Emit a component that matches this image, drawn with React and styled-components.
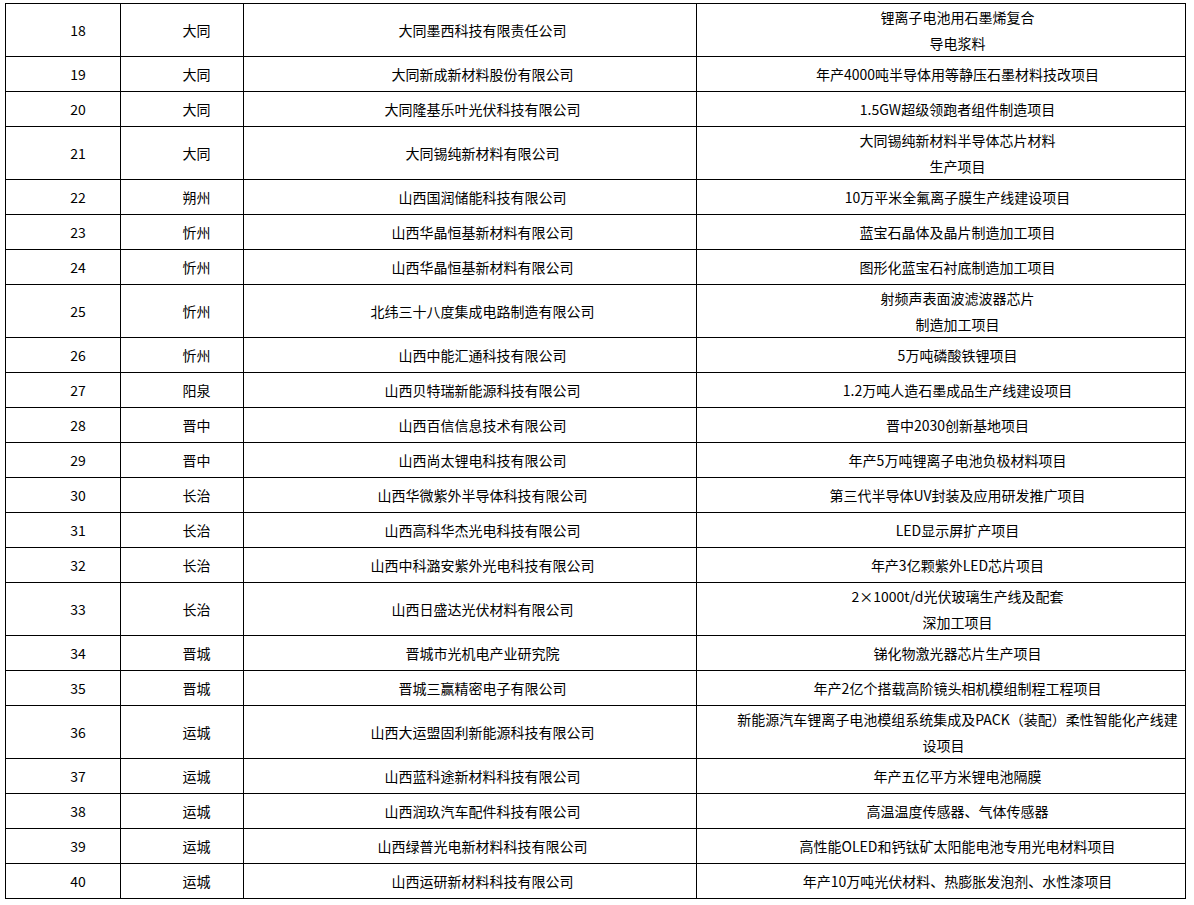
import React from "react";
import styled, { createGlobalStyle } from "styled-components";

const GlobalStyle = createGlobalStyle`
  html, body {
    margin: 0;
    padding: 0;
    background: #fff;
  }
  body {
    padding: 3px 0 0 5px;
    font-family: "Noto Sans CJK SC", "Liberation Sans", sans-serif;
    color: #000;
  }
`;

// [序号, 地市, 企业名称, 项目名称（按行）, 续行左移]
const rows = [
  [18, "大同", "大同墨西科技有限责任公司", ["锂离子电池用石墨烯复合", "导电浆料"]],
  [19, "大同", "大同新成新材料股份有限公司", ["年产4000吨半导体用等静压石墨材料技改项目"]],
  [20, "大同", "大同隆基乐叶光伏科技有限公司", ["1.5GW超级领跑者组件制造项目"]],
  [21, "大同", "大同锡纯新材料有限公司", ["大同锡纯新材料半导体芯片材料", "生产项目"]],
  [22, "朔州", "山西国润储能科技有限公司", ["10万平米全氟离子膜生产线建设项目"]],
  [23, "忻州", "山西华晶恒基新材料有限公司", ["蓝宝石晶体及晶片制造加工项目"]],
  [24, "忻州", "山西华晶恒基新材料有限公司", ["图形化蓝宝石衬底制造加工项目"]],
  [25, "忻州", "北纬三十八度集成电路制造有限公司", ["射频声表面波滤波器芯片", "制造加工项目"]],
  [26, "忻州", "山西中能汇通科技有限公司", ["5万吨磷酸铁锂项目"]],
  [27, "阳泉", "山西贝特瑞新能源科技有限公司", ["1.2万吨人造石墨成品生产线建设项目"]],
  [28, "晋中", "山西百信信息技术有限公司", ["晋中2030创新基地项目"]],
  [29, "晋中", "山西尚太锂电科技有限公司", ["年产5万吨锂离子电池负极材料项目"]],
  [30, "长治", "山西华微紫外半导体科技有限公司", ["第三代半导体UV封装及应用研发推广项目"]],
  [31, "长治", "山西高科华杰光电科技有限公司", ["LED显示屏扩产项目"]],
  [32, "长治", "山西中科潞安紫外光电科技有限公司", ["年产3亿颗紫外LED芯片项目"]],
  [33, "长治", "山西日盛达光伏材料有限公司", ["2×1000t/d光伏玻璃生产线及配套", "深加工项目"]],
  [34, "晋城", "晋城市光机电产业研究院", ["锑化物激光器芯片生产项目"]],
  [35, "晋城", "晋城三赢精密电子有限公司", ["年产2亿个搭载高阶镜头相机模组制程工程项目"]],
  [
    36,
    "运城",
    "山西大运盟固利新能源科技有限公司",
    ["新能源汽车锂离子电池模组系统集成及PACK（装配）柔性智能化产线建", "设项目"],
    28,
  ],
  [37, "运城", "山西蓝科途新材料科技有限公司", ["年产五亿平方米锂电池隔膜"]],
  [38, "运城", "山西润玖汽车配件科技有限公司", ["高温温度传感器、气体传感器"]],
  [39, "运城", "山西绿普光电新材料科技有限公司", ["高性能OLED和钙钛矿太阳能电池专用光电材料项目"]],
  [40, "运城", "山西运研新材料科技有限公司", ["年产10万吨光伏材料、热膨胀发泡剂、水性漆项目"]],
];

const columns = [
  { width: 115, indent: 30 },
  { width: 123, indent: 29 },
  { width: 453, indent: 25 },
  { width: 489, indent: 33 },
];

const Table = styled.table`
  border-collapse: collapse;
  table-layout: fixed;
  width: 1181px;
  font-size: 14px;
`;

const Col = styled.col`
  width: ${({ $w }) => $w}px;
`;

const Cell = styled.td`
  border: 1px solid #000;
  height: 34px;
  padding: 0 0 0 ${({ $indent }) => $indent}px;
  line-height: 26px;
  text-align: center;
  vertical-align: middle;
  white-space: nowrap;
  overflow: hidden;
`;

const Line = styled.div`
  white-space: nowrap;
  padding-right: ${({ $pull }) => $pull || 0}px;
`;

export default function App() {
  return (
    <>
      <GlobalStyle />
      <Table>
        <colgroup>
          {columns.map((c, i) => (
            <Col key={i} $w={c.width} />
          ))}
        </colgroup>
        <tbody>
          {rows.map(([no, city, company, project, pull]) => (
            <tr key={no}>
              <Cell $indent={columns[0].indent}>{no}</Cell>
              <Cell $indent={columns[1].indent}>{city}</Cell>
              <Cell $indent={columns[2].indent}>{company}</Cell>
              <Cell $indent={columns[3].indent}>
                {project.map((line, i) => (
                  <Line key={i} $pull={i > 0 ? pull : 0}>
                    {line}
                  </Line>
                ))}
              </Cell>
            </tr>
          ))}
        </tbody>
      </Table>
    </>
  );
}
